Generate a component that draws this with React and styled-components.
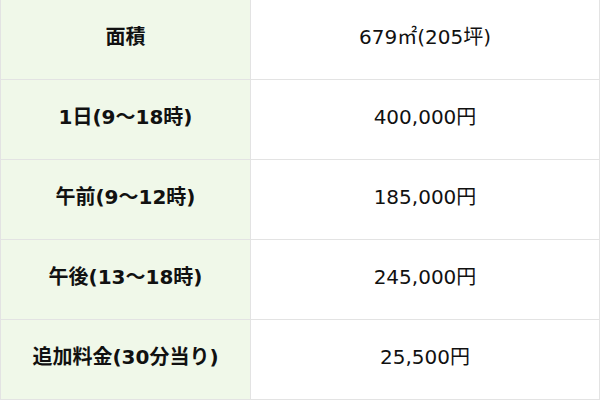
import React from "react";
import styled, { createGlobalStyle } from "styled-components";

const Global = createGlobalStyle`
  html, body { margin: 0; padding: 0; background: #fff; }
  body { font-family: "DejaVu Sans", "Noto Sans CJK JP", sans-serif; color: #111; }
`;

const Table = styled.div`
  display: grid;
  grid-template-columns: 251px 349px;
  grid-auto-rows: 80px;
  width: 600px;
`;

const Cell = styled.div`
  box-sizing: border-box;
  display: flex;
  align-items: center;
  justify-content: center;
  padding-bottom: 5px;
  border-bottom: 1px solid #e3e3e3;
  border-right: 1px solid #e3e3e3;
  font-size: 20px;
  line-height: 1;
  color: #111;
`;

const HeadCell = styled(Cell)`
  border-left: 1px solid #e3e3e3;
  background: #f0f8e9;
  font-weight: 700;
`;

const ValueCell = styled(Cell)`
  font-weight: 400;
`;

const rows = [
  ["面積", "679㎡(205坪)"],
  ["1日(9～18時)", "400,000円"],
  ["午前(9～12時)", "185,000円"],
  ["午後(13～18時)", "245,000円"],
  ["追加料金(30分当り)", "25,500円"],
];

export default function App() {
  return (
    <>
      <Global />
      <Table>
        {rows.map(([h, v]) => (
          <React.Fragment key={h}>
            <HeadCell>{h}</HeadCell>
            <ValueCell>{v}</ValueCell>
          </React.Fragment>
        ))}
      </Table>
    </>
  );
}
